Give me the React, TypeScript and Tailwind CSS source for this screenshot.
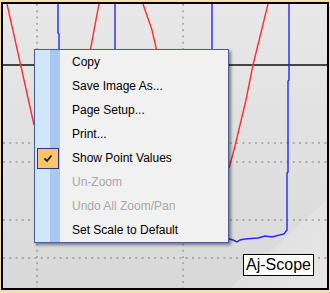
import React from "react";

type Item = { label: string; disabled?: boolean; checked?: boolean };

const items: Item[] = [
  { label: "Copy" },
  { label: "Save Image As..." },
  { label: "Page Setup..." },
  { label: "Print..." },
  { label: "Show Point Values", checked: true },
  { label: "Un-Zoom", disabled: true },
  { label: "Undo All Zoom/Pan", disabled: true },
  { label: "Set Scale to Default" },
];

function Chart() {
  // drawn in page coordinates, chart area spans x 3..327, y 4..288
  const dot = { stroke: "#7a7a7a", strokeWidth: 1, strokeDasharray: "2 4.3" };
  return (
    <svg className="absolute inset-0 h-full w-full" viewBox="3 4 324 284">
      <defs>
        <linearGradient id="bg" x1="0" y1="0" x2="0" y2="1">
          <stop offset="0" stopColor="#e8e8e8" />
          <stop offset="1" stopColor="#d9d9d9" />
        </linearGradient>
        <linearGradient id="band" x1="0" y1="0" x2="1" y2="1">
          <stop offset="0" stopColor="#ffffff" stopOpacity="0" />
          <stop offset="1" stopColor="#ffffff" stopOpacity="0.35" />
        </linearGradient>
      </defs>
      <rect x="3" y="4" width="324" height="284" fill="url(#bg)" />
      <polygon points="327,200 327,288 230,288" fill="url(#band)" />

      {/* grid */}
      <line x1="37" y1="4" x2="37" y2="288" {...dot} />
      <line x1="183" y1="4" x2="183" y2="288" {...dot} />
      <line x1="3" y1="143" x2="327" y2="143" {...dot} />
      <line x1="3" y1="162" x2="327" y2="162" {...dot} />
      <line x1="3" y1="220" x2="327" y2="220" {...dot} />
      <line x1="3" y1="258" x2="327" y2="258" {...dot} />
      <line x1="3" y1="65" x2="327" y2="65" stroke="#454545" strokeWidth="2" />

      {/* traces */}
      <g fill="none" stroke="#ff2e2e" strokeWidth="1.4">
        <polyline points="7,4 20,62 34,125" />
        <polyline points="99,4 95,25 90,52" />
        <polyline points="143,4 152,30 157,52" />
        <polyline points="268,4 253,65 246,100 234,150 229,168" />
      </g>
      <g fill="none" stroke="#2424ff" strokeWidth="1.4">
        <polyline points="58,4 58,33 59,34 59,52" />
        <polyline points="115,4 115,52" />
        <polyline points="212,4 212,52" />
        <polyline points="289,4 289,80 288,81 288,172 287,173 287,230 284,234 272,237 265,236 258,238 245,239 240,240 237,242 233,240 226,238" />
      </g>
    </svg>
  );
}

function Check() {
  return (
    <svg width="10" height="9" viewBox="0 0 10 9">
      <path d="M1.5 4.5 L4 7 L8.5 1.5" fill="none" stroke="#1c1c3c" strokeWidth="1.8" />
    </svg>
  );
}

function ContextMenu() {
  return (
    <div className="absolute left-[31px] top-[45px] w-[195px] border border-[#4a5e98] bg-[#f1f1f1] shadow-[2px_2px_3px_rgba(0,0,0,0.45)]">
      <div className="relative">
        <div className="absolute inset-y-0 left-0 flex w-[25px]">
          <div className="w-[15px] bg-[#cfe6fc]" />
          <div className="w-[10px] bg-[#a9c7ef]" />
        </div>
        {items.map((it) => (
          <div key={it.label} className="relative flex h-[24px] items-center">
            <div className="flex w-[37px] justify-start pl-[2px]">
              {it.checked && (
                <div className="flex h-[21px] w-[22px] items-center justify-center border border-[#24349a] bg-[#fdc46a]">
                  <Check />
                </div>
              )}
            </div>
            <span
              className={
                "text-[12px] leading-none " +
                (it.disabled ? "text-[#a8a8a8]" : "text-black")
              }
            >
              {it.label}
            </span>
          </div>
        ))}
      </div>
    </div>
  );
}

export default function App() {
  return (
    <div
      className="h-[293px] w-[330px] bg-[#f6ddb2] pt-[2px] pr-[1px] pb-[3px] pl-[1px]"
      style={{ fontFamily: '"Liberation Sans", Arial, sans-serif' }}
    >
      <div className="relative h-[288px] w-[328px] border-2 border-black">
        <Chart />
        <ContextMenu />
        <div className="absolute left-[240px] top-[250px] flex h-[22px] w-[71px] items-center justify-center border border-black bg-white text-[16px] leading-none text-black">
          Aj-Scope
        </div>
      </div>
    </div>
  );
}
